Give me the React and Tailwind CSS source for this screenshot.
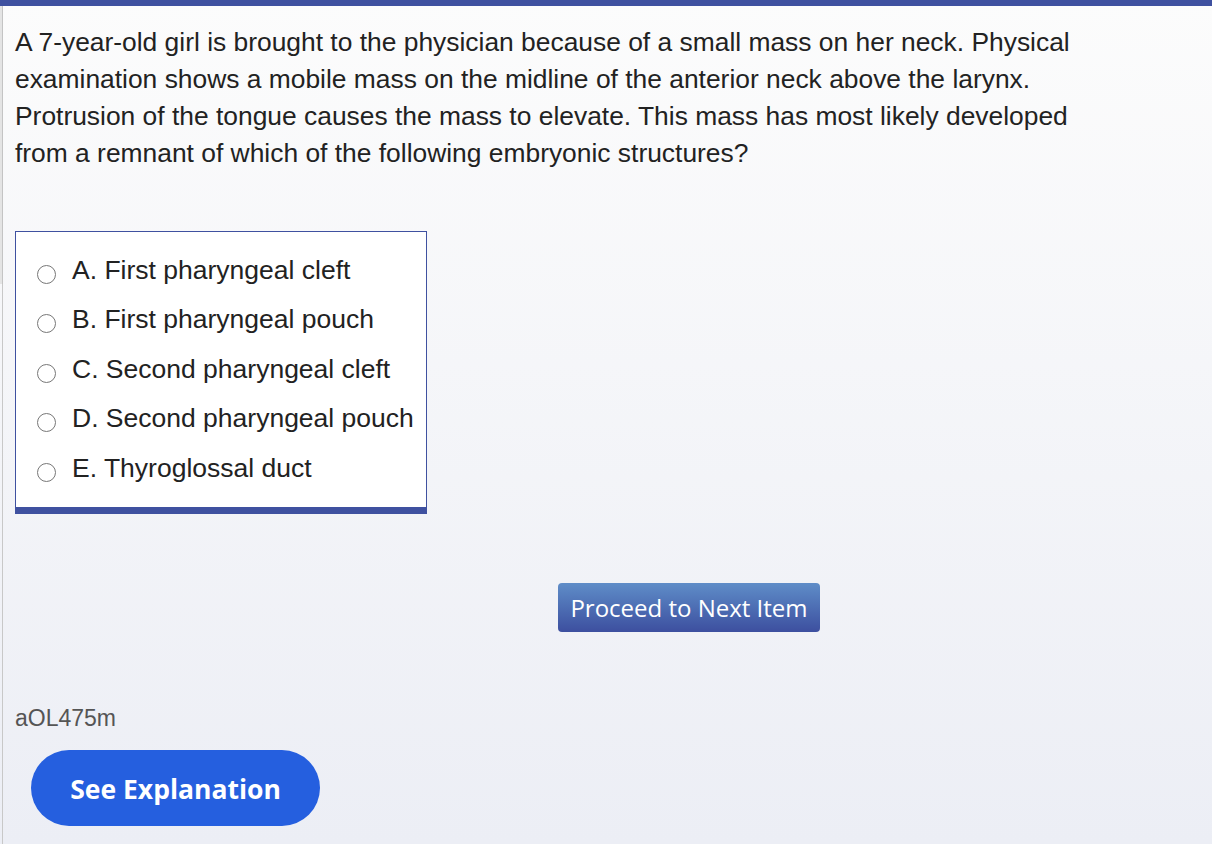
export default function App() {
  const options = [
    "A. First pharyngeal cleft",
    "B. First pharyngeal pouch",
    "C. Second pharyngeal cleft",
    "D. Second pharyngeal pouch",
    "E. Thyroglossal duct",
  ];
  return (
    <div className="w-[1212px] h-[844px] overflow-hidden flex flex-col bg-gradient-to-b from-[#fcfcfc] to-[#eceef5]" style={{ fontFamily: '"Liberation Sans", Arial, sans-serif' }}>
      <div className="h-[6px] bg-[#3f51a0] shrink-0" />
      <div className="flex-1 flex">
        <div className="w-[3px] shrink-0 flex flex-col">
          <div className="h-[278px] bg-[#e4e4e4] border-r border-[#c4c4c4]" />
          <div className="flex-1 border-r border-[#c8c8c8]" />
        </div>
        <div className="flex-1 pl-[12px] pr-4">
          <p className="mt-[18px] text-[26.4px] leading-[37px] text-[#222] whitespace-nowrap">
            A 7-year-old girl is brought to the physician because of a small mass on her neck. Physical
            <br />
            examination shows a mobile mass on the midline of the anterior neck above the larynx.
            <br />
            Protrusion of the tongue causes the mass to elevate. This mass has most likely developed
            <br />
            from a remnant of which of the following embryonic structures?
          </p>
          <div className="mt-[59px] w-[412px] h-[283px] bg-white border border-[#3f51a0] border-b-[7px] pt-[14px] pl-[21px] flex flex-col">
            {options.map((o) => (
              <div key={o} className="flex items-center h-[49.5px]">
                <span className="w-[19px] h-[19px] rounded-full border-[1.5px] border-[#777] bg-white shrink-0 mt-[7px] -ml-[0.5px]" />
                <span className="ml-[16.5px] text-[26.5px] text-[#222]">{o}</span>
              </div>
            ))}
          </div>
          <div className="mt-[69px] pl-[543px]">
            <button className="w-[262px] h-[49px] rounded-[4px] bg-gradient-to-b from-[#5f8dc8] to-[#3d4f9f] text-white text-[24px]" style={{ fontFamily: '"Open Sans", sans-serif' }}>
              Proceed to Next Item
            </button>
          </div>
          <div className="mt-[72px] text-[23px] text-[#555] leading-[28px]">aOL475m</div>
          <button className="mt-[18px] ml-[16px] w-[289px] h-[76px] rounded-full bg-[#255fdf] text-white text-[26.5px] font-bold pt-[3px]" style={{ fontFamily: '"Open Sans", sans-serif' }}>
            See Explanation
          </button>
        </div>
      </div>
    </div>
  );
}
